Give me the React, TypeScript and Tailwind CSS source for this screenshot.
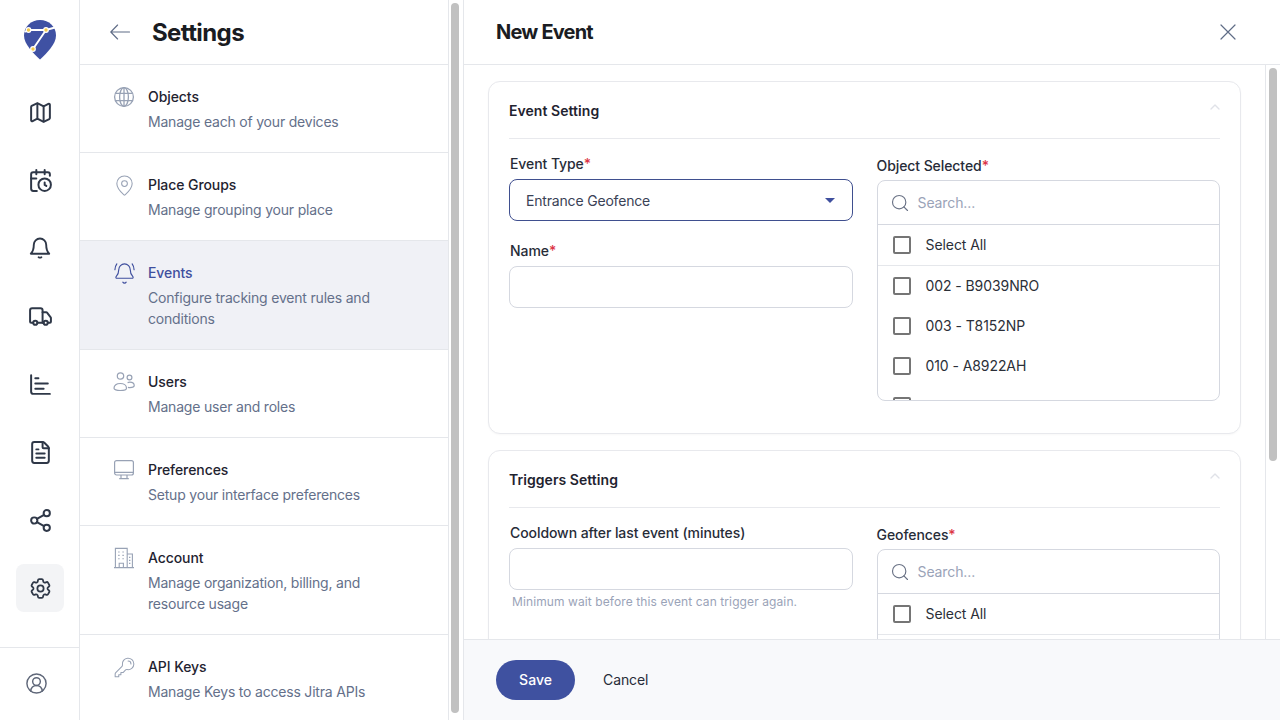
import React from 'react';
import {
  BellRing, CalendarClock, ChartBar, ChevronUp, CircleUserRound, FileText,
  Map as MapIcon, MapPin, Search, Share2, Truck,
} from 'lucide-react';
import { HiOutlineCog6Tooth } from 'react-icons/hi2';

type IconProps = { className?: string };

function RailBell({ className }: IconProps) {
  return (
    <svg viewBox="0 0 24 24" width="24" height="24" fill="none" stroke="currentColor" strokeWidth="1.9" strokeLinecap="round" strokeLinejoin="round" className={className}>
      <path d="M12 2.5a6.2 6.2 0 0 0-6.2 6.2c0 4.6-.9 6.9-3 9h18.4c-2.1-2.1-3-4.4-3-9A6.2 6.2 0 0 0 12 2.5z" />
      <path d="M10.6 21.2c.8.5 2 .5 2.8 0" />
    </svg>
  );
}

function RailCog({ className }: IconProps) {
  return <HiOutlineCog6Tooth size={25} strokeWidth={1.7} className={className} />;
}

function GlobeLine({ className }: IconProps) {
  return (
    <svg viewBox="0 0 22 22" width="22" height="22" fill="none" stroke="currentColor" strokeWidth="1.3" className={className}>
      <circle cx="11" cy="11" r="9.4" />
      <ellipse cx="11" cy="11" rx="4.4" ry="9.4" />
      <path d="M2.5 7.4h17M2.5 14.6h17M11 1.6v18.8" />
    </svg>
  );
}

function UsersLine({ className }: IconProps) {
  return (
    <svg viewBox="0 0 22 22" width="22" height="22" fill="none" stroke="currentColor" strokeWidth="1.2" className={className}>
      <circle cx="7.5" cy="5" r="3.2" />
      <circle cx="16.5" cy="6.5" r="2.4" />
      <path d="M1 17.2c0-2.8 2.6-4.7 6.2-4.7s6.3 1.9 6.3 4.7c0 1.4-2.8 2.3-6.3 2.3S1 18.6 1 17.2z" />
      <path d="M14.6 11.6c.7-.3 1.4-.4 2.2-.4 2.6 0 4.4 1.4 4.4 3.4 0 1.3-1.9 2-4.3 2-.7 0-1.4-.1-2-.2" />
    </svg>
  );
}

function MonitorLine({ className }: IconProps) {
  return (
    <svg viewBox="0 0 22 22" width="22" height="22" fill="none" stroke="currentColor" strokeWidth="1.2" strokeLinejoin="round" className={className}>
      <rect x="1.6" y="1.6" width="18.8" height="14.4" rx="2" />
      <path d="M1.6 13.4h18.8M8 16v3M14 16v3M6.2 19.6h9.6" />
    </svg>
  );
}

function BuildingLine({ className }: IconProps) {
  return (
    <svg viewBox="0 0 22 22" width="22" height="22" fill="none" stroke="currentColor" strokeWidth="1.1" className={className}>
      <path d="M1 20.6h20M2.4 20.6V1.4h11.8v19.2M14.2 7h5.2v13.6M6.2 20.6v-4.4h4.2v4.4" />
      <path d="M5.2 5h1.4M9.4 5h1.4M5.2 8.4h1.4M9.4 8.4h1.4M5.2 11.8h1.4M9.4 11.8h1.4M16 10.4h1.4M16 13.4h1.4M16 16.4h1.4" />
    </svg>
  );
}

function KeyLine({ className }: IconProps) {
  return (
    <svg viewBox="0 0 24 24" width="23" height="23" fill="none" stroke="currentColor" strokeWidth="1.1" strokeLinecap="round" strokeLinejoin="round" className={className}>
      <path d="M15.75 5.25a3 3 0 0 1 3 3m3 0a6 6 0 0 1-7.029 5.912c-.563-.097-1.159.026-1.563.43L10.5 17.25H8.25v2.25H6v2.25H2.25v-2.818c0-.597.237-1.17.659-1.591l6.499-6.499c.404-.404.527-1 .43-1.563A6 6 0 1 1 21.75 8.25Z" />
    </svg>
  );
}

function PinLine({ className }: IconProps) {
  return <MapPin size={23} strokeWidth={1.1} className={className} />;
}

function BellRingLine({ className }: IconProps) {
  return <BellRing size={23} strokeWidth={1.2} className={className} />;
}

const navIcons = [
  <MapIcon size={25} strokeWidth={1.9} />,
  <CalendarClock size={25} strokeWidth={1.9} />,
  <RailBell />,
  <Truck size={25} strokeWidth={1.9} />,
  <ChartBar size={25} strokeWidth={1.9} />,
  <FileText size={25} strokeWidth={1.9} />,
  <Share2 size={25} strokeWidth={1.9} />,
  <RailCog />,
];

const settingsItems = [
  { icon: GlobeLine, title: 'Objects', desc: 'Manage each of your devices' },
  { icon: PinLine, title: 'Place Groups', desc: 'Manage grouping your place' },
  { icon: BellRingLine, title: 'Events', desc: 'Configure tracking event rules and conditions', active: true },
  { icon: UsersLine, title: 'Users', desc: 'Manage user and roles' },
  { icon: MonitorLine, title: 'Preferences', desc: 'Setup your interface preferences' },
  { icon: BuildingLine, title: 'Account', desc: 'Manage organization, billing, and resource usage' },
  { icon: KeyLine, title: 'API Keys', desc: 'Manage Keys to access Jitra APIs' },
];

const objects = ['002 - B9039NRO', '003 - T8152NP', '010 - A8922AH'];

function Logo() {
  return (
    <svg viewBox="0 0 32 40" className="w-8 h-10">
      <path d="M16 0C25 0 32 6.5 32 15.5C32 24 23 33 16 39.5C9 33 0 24 0 15.5C0 6.5 7 0 16 0Z" fill="#3f51a3" />
      <path d="M0.5 12L4.5 10H22L31 7.5M22 10L9 29L3 33" fill="none" stroke="#fff" strokeWidth="1.9" />
      <circle cx="4.5" cy="10" r="2.9" fill="#fff" />
      <circle cx="22" cy="10" r="2.9" fill="#fff" />
      <circle cx="9" cy="29" r="2.9" fill="#fff" />
      <circle cx="4.5" cy="10" r="1.7" fill="#f2c94c" />
      <circle cx="22" cy="10" r="1.7" fill="#f2c94c" />
      <circle cx="9" cy="29" r="1.7" fill="#f2c94c" />
    </svg>
  );
}

function Label({ text, required, inset }: { text: string; required?: boolean; inset?: boolean }) {
  return (
    <div className={`text-sm leading-5 font-medium tracking-[-0.08px] text-[#272c38] ${inset ? 'pl-px' : ''}`}>
      {text}
      {required && <span className="text-[#dc3545]">*</span>}
    </div>
  );
}

function Checkbox() {
  return <span className="w-[18px] h-[18px] shrink-0 border-2 border-[#757575] rounded-[2px]" />;
}

function PickList({ rows, extraBox }: { rows: string[]; extraBox?: boolean }) {
  return (
    <div className="mt-1 h-[221px] border border-[#d5d8e0] rounded-lg overflow-hidden">
      <div className="h-11 flex items-center gap-2 pl-[12px] border-b border-[#d5d8e0]">
        <Search size={20} strokeWidth={1.4} className="text-[#6b7386]" />
        <span className="text-sm tracking-[-0.1px] text-[#9aa3b8]">Search...</span>
      </div>
      <div className="h-[41px] flex items-center gap-[15px] pl-[15px] border-b border-[#e5e7eb] text-sm tracking-[-0.08px] text-[#2b2f38]">
        <Checkbox />
        Select All
      </div>
      {rows.map((row) => (
        <div key={row} className="h-10 flex items-center gap-[15px] pl-[15px] text-sm tracking-[-0.08px] text-[#2b2f38]">
          <Checkbox />
          {row}
        </div>
      ))}
      {/* next row is cut by the list edge, only the top of its box shows */}
      {extraBox && (
        <div className="h-10 flex items-center pl-[15px]">
          <Checkbox />
        </div>
      )}
    </div>
  );
}

function Card({ title, children }: { title: string; children: React.ReactNode }) {
  return (
    <section className="mb-4 border border-[#e8e9ed] rounded-xl px-5 pb-8 bg-white shadow-[0_1px_2px_rgba(0,0,0,0.03)]">
      <div className="h-[57px] flex items-center justify-between border-b border-[#e8e9ed]">
        <h2 className="pt-[2px] text-sm font-semibold tracking-[0.05px] text-[#1f2330]">{title}</h2>
        <ChevronUp size={16} strokeWidth={2} className="text-[#e0e2e8] mb-[6px] -mr-[3px]" />
      </div>
      <div className="pt-[15px] grid grid-cols-2 gap-6">{children}</div>
    </section>
  );
}

export default function App() {
  return (
    <div className="w-[1280px] h-[720px] flex overflow-hidden bg-white font-['Inter',sans-serif]">
      {/* icon rail */}
      <aside className="w-20 shrink-0 flex flex-col border-r border-[#e5e7eb] pt-5">
        <div className="flex justify-center pl-px mb-7">
          <Logo />
        </div>
        <nav className="flex-1 flex flex-col items-center gap-5 pl-px">
          {navIcons.map((icon, i) => (
            <div
              key={i}
              className={`w-12 h-12 flex items-center justify-center rounded-lg text-[#2f3848] ${i === 7 ? 'bg-[#f3f4f6]' : ''}`}
            >
              {icon}
            </div>
          ))}
        </nav>
        <div className="h-[73px] border-t border-[#e5e7eb] flex items-center pl-[25px] pb-[2px]">
          <CircleUserRound size={23} strokeWidth={1.5} className="text-[#5f6779]" />
        </div>
      </aside>

      {/* settings list */}
      <div className="w-[368px] shrink-0 flex flex-col">
        <header className="h-[65px] shrink-0 flex items-center gap-[22px] pl-[30px] border-b border-[#e5e7eb]">
          <svg viewBox="0 0 20 16" width="20" height="16" fill="none" stroke="#5f6c86" strokeWidth="1.1" strokeLinecap="round" strokeLinejoin="round">
            <path d="M19.5 8H.8M7.6 1 .8 8l6.8 7" />
          </svg>
          <h1 className="pt-px text-2xl font-bold tracking-[-0.025em] text-[#1a1c22]">Settings</h1>
        </header>
        {settingsItems.map((item) => (
          <div
            key={item.title}
            className={`flex pl-[33px] pr-[60px] pt-5 pb-5 border-b border-[#e5e7eb] ${item.active ? 'bg-[#f0f1f6]' : ''}`}
          >
            <div className="w-[35px] shrink-0 pt-[1px]">
              <item.icon className={item.active ? 'text-[#3f4f9e]' : 'text-[#98a2b5]'} />
            </div>
            <div>
              <div className={`text-sm leading-6 font-medium tracking-[-0.08px] ${item.active ? 'text-[#3f4f9e]' : 'text-[#1f2330]'}`}>{item.title}</div>
              <div className="mt-[2px] text-sm leading-[21px] tracking-[-0.2px] text-[#64708a]">{item.desc}</div>
            </div>
          </div>
        ))}
      </div>

      {/* list scrollbar */}
      <div className="w-4 shrink-0 border-x border-[#e5e7eb] pt-[3px] pl-[2px]">
        <div className="w-2 h-[710px] rounded-full bg-[#c1c1c1]" />
      </div>

      {/* form */}
      <main className="flex-1 min-w-0 flex flex-col">
        <header className="h-[65px] shrink-0 flex items-center justify-between pl-8 pr-[44px] border-b border-[#e5e7eb]">
          <h1 className="text-xl font-bold tracking-[-0.04em] text-[#1a1c22]">New Event</h1>
          <svg viewBox="0 0 16 16" width="16" height="16" fill="none" stroke="#5f6c86" strokeWidth="1.2" strokeLinecap="round">
            <path d="M1 1l14 14M15 1 1 15" />
          </svg>
        </header>
        <div className="flex-1 min-h-0 flex overflow-hidden">
          <div className="flex-1 min-w-0 pt-4 pl-6 pr-6">
            <Card title="Event Setting">
              <div>
                <Label text="Event Type" required inset />
                <div className="mt-[5px] h-[42px] flex items-center justify-between pl-4 pr-[17px] pt-px border border-[#3f4f8f] rounded-lg text-sm tracking-[-0.18px] text-[#3a4256]">
                  Entrance Geofence
                  <span className="w-0 h-0 border-x-[5px] border-x-transparent border-t-[5px] border-t-[#3f4f9e]" />
                </div>
                <div className="mt-5">
                  <Label text="Name" required inset />
                  <div className="mt-[5px] h-[42px] border border-[#d5d8e0] rounded-lg" />
                </div>
              </div>
              <div className="pt-[2px]">
                <Label text="Object Selected" required />
                <PickList rows={objects} extraBox />
              </div>
            </Card>
            <Card title="Triggers Setting">
              <div>
                <Label text="Cooldown after last event (minutes)" inset />
                <div className="mt-[5px] h-[42px] border border-[#d5d8e0] rounded-lg" />
                <p className="mt-1 pl-[3px] text-xs leading-4 tracking-[0.1px] text-[#9aa3b8]">Minimum wait before this event can trigger again.</p>
              </div>
              <div className="pt-[2px]">
                <Label text="Geofences" required />
                <PickList rows={[]} />
              </div>
            </Card>
          </div>
          <div className="w-[15px] shrink-0 border-l border-[#e5e7eb] pt-[3px] pl-[3px]">
            <div className="w-2 h-[393px] rounded-full bg-[#c1c1c1]" />
          </div>
        </div>
        <footer className="h-[81px] shrink-0 flex items-center gap-7 pl-8 border-t border-[#e5e7eb] bg-[#f8f9fb]">
          <button className="w-[79px] h-10 rounded-full bg-[#3f51a0] text-sm font-medium text-white">Save</button>
          <button className="text-sm tracking-[-0.08px] text-[#272c38]">Cancel</button>
        </footer>
      </main>
    </div>
  );
}
